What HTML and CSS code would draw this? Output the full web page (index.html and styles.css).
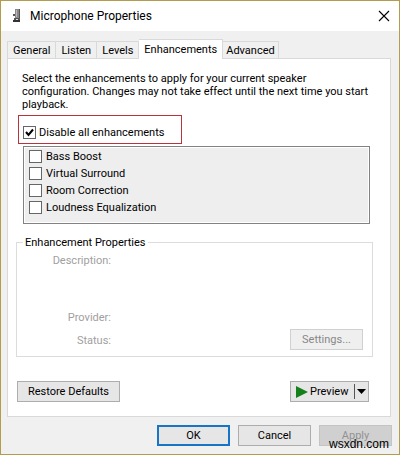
FILE: index.html
```html
<!DOCTYPE html>
<html lang="en">
<head>
<meta charset="utf-8">
<title>Microphone Properties</title>
<link rel="stylesheet" href="styles.css">
</head>
<body>
<main class="window">
  <header class="titlebar">
    <svg class="mic" viewBox="0 0 10 16" aria-hidden="true">
      <path d="M3 1h5v9H3z" fill="#888"/>
      <path d="M4 2h1v7H4z" fill="#bbb"/>
      <path d="M7 1h1v11H7z" fill="#555"/>
      <path d="M1 6h2v2H1zM2 10h5v2H2z" fill="#555"/>
      <path d="M1 12h7v2H1z" fill="#333"/>
      <path d="M4 11h2v1H4z" fill="#ddd"/>
    </svg>
    <h1 class="title">Microphone Properties</h1>
    <button class="close" type="button" aria-label="Close">
      <svg viewBox="0 0 10 10" aria-hidden="true"><path d="M0 0L10 10M10 0L0 10" stroke="#000" stroke-width="1.1"/></svg>
    </button>
  </header>
  <div class="body">
    <div class="tabs" role="tablist">
      <button class="tab" type="button" role="tab">General</button>
      <button class="tab" type="button" role="tab">Listen</button>
      <button class="tab" type="button" role="tab">Levels</button>
      <button class="tab selected" type="button" role="tab" aria-selected="true">Enhancements</button>
      <button class="tab" type="button" role="tab">Advanced</button>
    </div>
    <section class="panel">
      <p class="intro">Select the enhancements to apply for your current speaker<br>configuration. Changes may not take effect until the next time you start<br>playback.</p>
      <div class="highlight">
        <label class="check"><input type="checkbox" checked>Disable all enhancements</label>
      </div>
      <div class="list">
        <label class="check"><input type="checkbox">Bass Boost</label>
        <label class="check"><input type="checkbox">Virtual Surround</label>
        <label class="check"><input type="checkbox">Room Correction</label>
        <label class="check"><input type="checkbox">Loudness Equalization</label>
      </div>
      <fieldset class="group">
        <legend>Enhancement Properties</legend>
        <div class="props">
          <span>Description:</span>
          <span>Provider:</span>
          <span>Status:</span>
        </div>
        <button class="btn settings" type="button" disabled>Settings...</button>
      </fieldset>
      <div class="actions">
        <button class="btn restore" type="button">Restore Defaults</button>
        <button class="btn preview" type="button">
          <svg class="play" viewBox="0 0 12 12" aria-hidden="true"><path d="M0 0L12 6L0 12z" fill="#15801b"/></svg>
          <span>Preview</span>
          <svg class="drop" viewBox="0 0 14 15" aria-hidden="true"><path d="M0 0h1v15H0z" fill="#555"/><path d="M3 5h9L7.500 10z" fill="#000"/></svg>
        </button>
      </div>
    </section>
    <footer class="footer">
      <button class="btn ok" type="button">OK</button>
      <button class="btn" type="button">Cancel</button>
      <button class="btn apply" type="button" disabled>Apply</button>
    </footer>
  </div>
  <span class="watermark">wsxdn.com</span>
</main>
</body>
</html>
```
FILE: styles.css
```css
* { box-sizing: border-box; }
body {
  margin: 0;
  font: 11px/13px Roboto, sans-serif;
  color: #000;
}
button { font: inherit; color: inherit; padding: 0; margin: 0; }
.window {
  position: relative;
  min-height: 100vh;
  border: 1px solid #b39c4d;
  background: #f0f0f0;
}
.titlebar {
  display: flex;
  align-items: center;
  height: 30px;
  padding: 0 10px 0 11px;
  background: #fff;
}
.mic { width: 10px; height: 16px; }
.title {
  flex: 1;
  margin: 0 0 0 8px;
  font: 12px/16px Roboto, sans-serif;
}
.close { width: 10px; height: 10px; border: 0; background: none; }
.close svg { display: block; width: 10px; height: 10px; overflow: visible; }
.body { padding: 8px 7px 8px 6px; }
.tabs { display: flex; align-items: flex-end; height: 19px; }
.tab {
  height: 17px;
  padding: 0 5px;
  border: 1px solid #d9d9d9;
  border-width: 1px 1px 0 0;
  background: #f0f0f0;
}
.tab:first-child { border-left-width: 1px; }
.tab:last-child { padding: 0 3px; }
.tab.selected {
  position: relative;
  height: 20px;
  margin-bottom: -1px;
  padding: 0 5px 1px;
  background: #fff;
}
.panel {
  margin-right: 1px;
  padding: 13px 17px 14px 8px;
  border: 1px solid #d9d9d9;
  background: #fff;
}
.intro { margin: 0 0 4px 6px; }
.highlight {
  width: 164px;
  height: 29px;
  margin-left: 2px;
  padding: 8px 0 0 4px;
  border: 1px solid #b8333c;
}
.check { display: flex; align-items: center; gap: 4px; height: 17px; white-space: nowrap; }
.highlight .check { gap: 3px; }
.check input {
  appearance: none;
  width: 13px;
  height: 13px;
  margin: 0;
  border: 1px solid #666;
  background: #fff;
}
.check input:checked {
  background: #fff url("data:image/svg+xml,%3Csvg xmlns='http://www.w3.org/2000/svg' viewBox='0 0 11 11'%3E%3Cpath d='M2 5L4.500 8L9 2.500' fill='none' stroke='%23000' stroke-width='2'/%3E%3C/svg%3E");
}
.list {
  margin: 2px 3px 0 7px;
  height: 78px;
  padding: 1px 5px;
  border: 1px solid #828282;
  box-shadow: inset 0 0 0 1px #fff;
  background: #eee;
}
.group {
  display: flex;
  justify-content: space-between;
  align-items: flex-end;
  height: 121px;
  margin: 12px 0 0;
  padding: 0 9px 6px 7px;
  min-width: 0;
  border: 1px solid #dcdcdc;
}
.group legend { padding: 0 2px; margin-left: -1px; }
.props {
  display: grid;
  grid-template-rows: 57px 23px 16px;
  width: 87px;
  text-align: right;
  color: #a0a0a0;
}
.btn {
  width: 73px;
  height: 21px;
  border: 1px solid #adadad;
  background: #e6e6e6;
}
.settings { border-color: #d0d0d0; background: #efefef; color: #888; }
.actions { display: flex; justify-content: space-between; margin-top: 24px; padding-right: 4px; }
.restore { width: 103px; margin-left: 1px; }
.preview { display: flex; align-items: center; width: 79px; padding: 0 0 0 5px; }
.play { width: 12px; height: 12px; margin-right: 2px; }
.drop { width: 14px; height: 15px; margin-left: auto; }
.footer { display: flex; justify-content: flex-end; gap: 8px; margin-top: 8px; }
.ok { border: 2px solid #1874c4; }
.apply { border-color: #c4c4c4; background: #d0d0d0; color: #929292; }
.watermark {
  position: absolute;
  right: 10px;
  bottom: 2px;
  font: 12px/15px "Liberation Sans", sans-serif;
}
```
